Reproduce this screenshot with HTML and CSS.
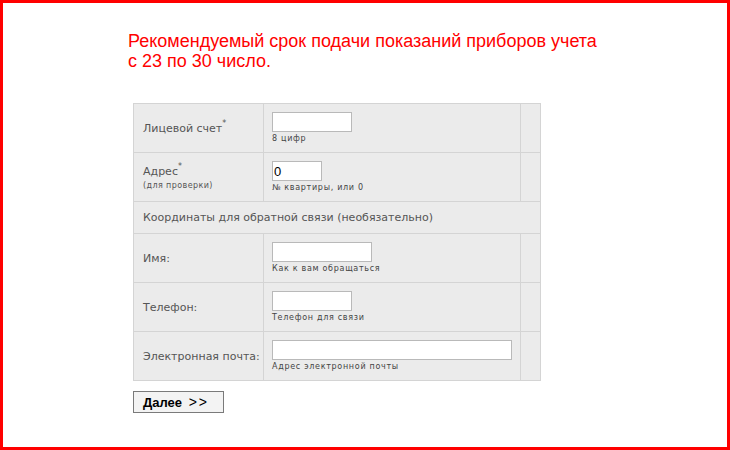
FILE: index.html
```html
<!DOCTYPE html>
<html lang="ru">
<head>
<meta charset="utf-8">
<title>Показания приборов учета</title>
<link rel="stylesheet" href="styles.css">
</head>
<body>
<div class="frame">
  <div class="content">
    <h1 class="notice">Рекомендуемый срок подачи показаний приборов учета<br>с 23 по 30 число.</h1>
    <form class="meter-form">
      <table class="form-table">
        <tr class="row">
          <td class="label">Лицевой счет<sup class="req">*</sup></td>
          <td class="field">
            <input class="input w80" type="text">
            <div class="hint">8 цифр</div>
          </td>
          <td class="spare"></td>
        </tr>
        <tr class="row">
          <td class="label">Адрес<sup class="req">*</sup><div class="sub">(для проверки)</div></td>
          <td class="field">
            <input class="input w50" type="text" value="0">
            <div class="hint">№ квартиры, или 0</div>
          </td>
          <td class="spare"></td>
        </tr>
        <tr class="row-section">
          <td class="section" colspan="3">Координаты для обратной связи (необязательно)</td>
        </tr>
        <tr class="row">
          <td class="label">Имя:</td>
          <td class="field">
            <input class="input w100" type="text">
            <div class="hint">Как к вам обращаться</div>
          </td>
          <td class="spare"></td>
        </tr>
        <tr class="row">
          <td class="label">Телефон:</td>
          <td class="field">
            <input class="input w80" type="text">
            <div class="hint">Телефон для связи</div>
          </td>
          <td class="spare"></td>
        </tr>
        <tr class="row">
          <td class="label">Электронная почта:</td>
          <td class="field">
            <input class="input w240" type="text">
            <div class="hint">Адрес электронной почты</div>
          </td>
          <td class="spare"></td>
        </tr>
      </table>
      <button class="next" type="button">Далее <span class="arrows">&gt;&gt;</span></button>
    </form>
  </div>
</div>
</body>
</html>
```

FILE: styles.css
```css
html, body {
  margin: 0;
  padding: 0;
  background: #fff;
}

.frame {
  box-sizing: border-box;
  width: 730px;
  height: 450px;
  border: 3px solid #ff0000;
  overflow: hidden;
}

.content {
  padding: 28px 0 0 125px;
}

.notice {
  margin: 0;
  color: #ff0000;
  font: normal 18px/20px "Liberation Sans", Arial, sans-serif;
}

.meter-form {
  margin-top: 32px;
  margin-left: 5px;
}

.form-table {
  border-collapse: collapse;
  background: #ebebeb;
  border: 1px solid #dadada;
  font-family: "DejaVu Sans", Verdana, sans-serif;
  color: #555;
}

.form-table td {
  border: 1px solid #d4d4d4;
  padding: 0;
}

.row td {
  height: 48px;
}

.label {
  width: 120px;
  padding: 0 0 0 9px !important;
  font-size: 11px;
  vertical-align: middle;
}

.req {
  font-size: 8px;
  vertical-align: top;
  position: relative;
  top: -3px;
}

.sub {
  font-size: 8px;
  letter-spacing: 0.4px;
  margin-top: 3px;
}

.field {
  width: 248px;
  padding: 0 0 0 8px !important;
  vertical-align: top;
}

.field .input {
  display: block;
  box-sizing: border-box;
  height: 20px;
  margin: 8px 0 0;
  padding: 0 1px;
  border: 1px solid #b9b9b9;
  background: #fff;
  font: 13px "Liberation Sans", Arial, sans-serif;
  color: #000;
  outline: none;
}

.w50 { width: 50px; }
.w80 { width: 80px; }
.w100 { width: 100px; }
.w240 { width: 240px; }

.hint {
  margin-top: 2px;
  font-size: 8px;
  letter-spacing: 0.7px;
  color: #444;
}

.spare {
  width: 19px;
}

.row-section td {
  height: 31px;
  padding-left: 9px;
  font-size: 11px;
  vertical-align: middle;
}

.next {
  display: block;
  margin-top: 10px;
  width: 91px;
  height: 22px;
  padding: 0 0 0 9px;
  text-align: left;
  border: 1px solid #7a7a7a;
  border-radius: 0;
  background: #f3f3f3;
  color: #000;
  font: bold 13px "Liberation Sans", Arial, sans-serif;
  white-space: nowrap;
}

.arrows {
  margin-left: 3px;
  font-size: 14px;
  font-weight: normal;
  letter-spacing: 2px;
}
```
